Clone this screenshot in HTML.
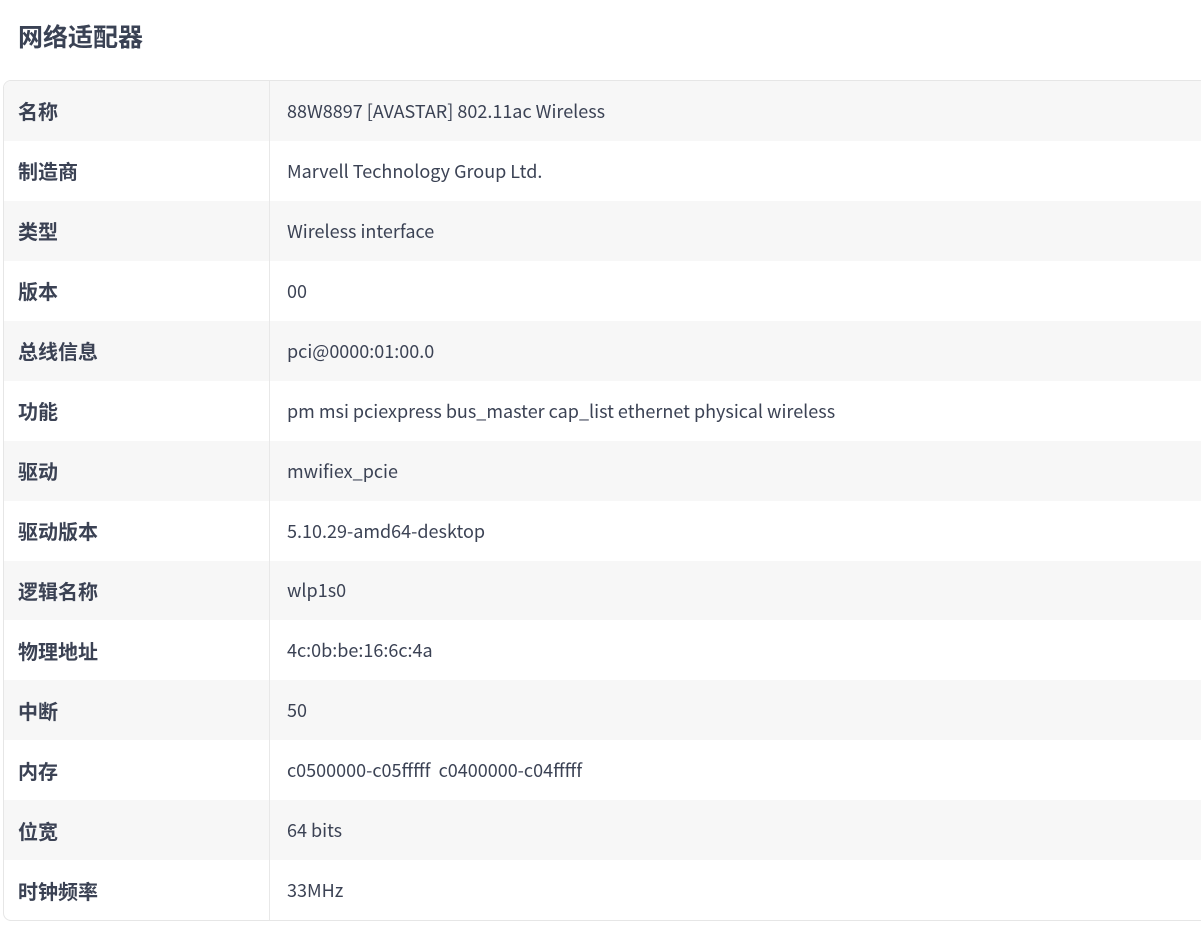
<!DOCTYPE html>
<html><head><meta charset="utf-8"><style>
body{margin:0;background:#fff;font-family:"Noto Sans CJK SC",sans-serif;color:#3b4254;width:1201px;height:934px;overflow:hidden;position:relative}
h1{position:absolute;left:18px;top:18px;margin:0;font-size:25px;font-weight:bold;line-height:36px;color:#3a4254}
.tbl{position:absolute;left:3px;top:80px;width:1220px;border:1px solid #e6e6e6;border-radius:8px;overflow:hidden}
.r{display:flex;height:59.95px;align-items:center}
.r:nth-child(odd){background:#f7f7f7}
.k{width:266px;padding-left:14px;box-sizing:border-box;font-weight:bold;font-size:20px;height:100%;display:flex;align-items:center;border-right:1px solid #e8e8e8}
.v{padding-left:17px;font-size:18px;color:#3b4254}
</style></head><body>
<h1>网络适配器</h1>
<div class="tbl">
<div class="r"><div class="k">名称</div><div class="v">88W8897 [AVASTAR] 802.11ac Wireless</div></div>
<div class="r"><div class="k">制造商</div><div class="v">Marvell Technology Group Ltd.</div></div>
<div class="r"><div class="k">类型</div><div class="v">Wireless interface</div></div>
<div class="r"><div class="k">版本</div><div class="v">00</div></div>
<div class="r"><div class="k">总线信息</div><div class="v">pci@0000:01:00.0</div></div>
<div class="r"><div class="k">功能</div><div class="v">pm msi pciexpress bus_master cap_list ethernet physical wireless</div></div>
<div class="r"><div class="k">驱动</div><div class="v">mwifiex_pcie</div></div>
<div class="r"><div class="k">驱动版本</div><div class="v">5.10.29-amd64-desktop</div></div>
<div class="r"><div class="k">逻辑名称</div><div class="v">wlp1s0</div></div>
<div class="r"><div class="k">物理地址</div><div class="v">4c:0b:be:16:6c:4a</div></div>
<div class="r"><div class="k">中断</div><div class="v">50</div></div>
<div class="r"><div class="k">内存</div><div class="v">c0500000-c05fffff&nbsp; c0400000-c04fffff</div></div>
<div class="r"><div class="k">位宽</div><div class="v">64 bits</div></div>
<div class="r"><div class="k">时钟频率</div><div class="v">33MHz</div></div>
</div>
</body></html>
